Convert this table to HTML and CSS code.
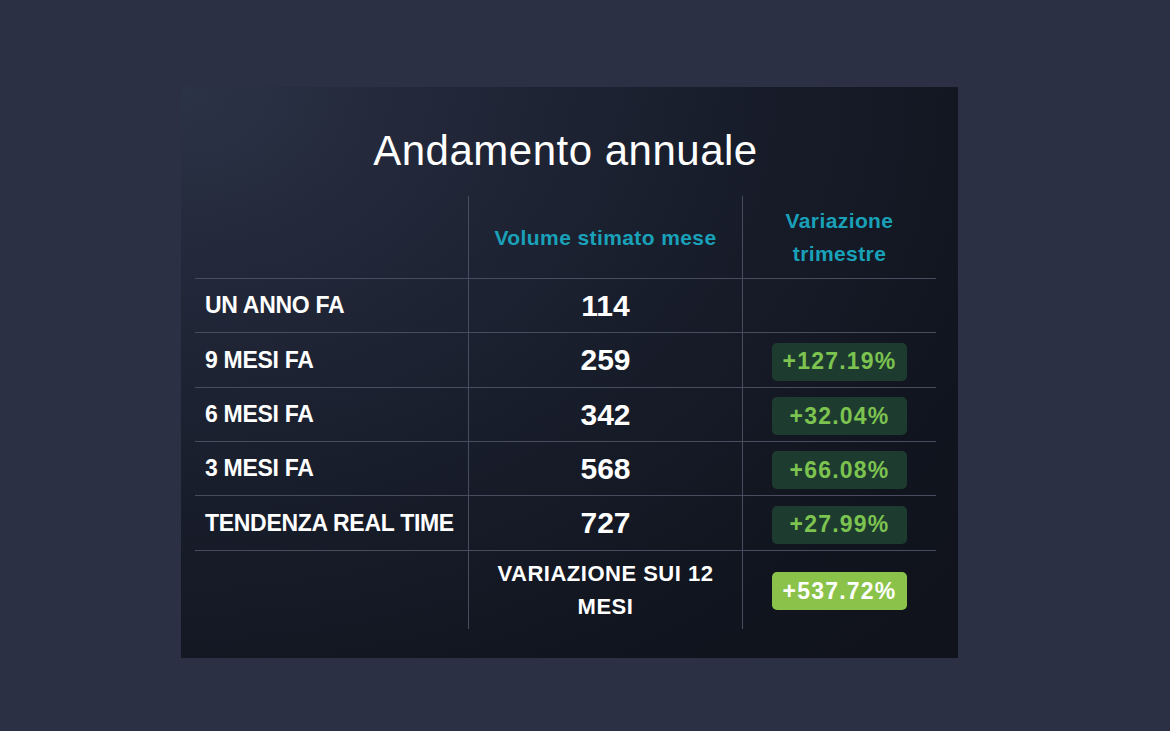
FILE: index.html
```html
<!DOCTYPE html>
<html lang="it">
<head>
<meta charset="utf-8">
<title>Andamento annuale</title>
<link rel="stylesheet" href="styles.css">
</head>
<body>
<section class="card">
  <h1 class="title">Andamento annuale</h1>
  <div class="table">
    <div class="cell c1 head"></div>
    <div class="cell c2 head"><span class="th">Volume stimato mese</span></div>
    <div class="cell c3 head"><span class="th th-2">Variazione<br>trimestre</span></div>

    <div class="cell c1"><span class="label">UN ANNO FA</span></div>
    <div class="cell c2"><span class="num">114</span></div>
    <div class="cell c3"></div>

    <div class="cell c1"><span class="label">9 MESI FA</span></div>
    <div class="cell c2"><span class="num">259</span></div>
    <div class="cell c3"><span class="badge">+127.19%</span></div>

    <div class="cell c1"><span class="label">6 MESI FA</span></div>
    <div class="cell c2"><span class="num">342</span></div>
    <div class="cell c3"><span class="badge">+32.04%</span></div>

    <div class="cell c1"><span class="label">3 MESI FA</span></div>
    <div class="cell c2"><span class="num">568</span></div>
    <div class="cell c3"><span class="badge">+66.08%</span></div>

    <div class="cell c1"><span class="label">TENDENZA REAL TIME</span></div>
    <div class="cell c2"><span class="num">727</span></div>
    <div class="cell c3"><span class="badge">+27.99%</span></div>

    <div class="cell c1 last"></div>
    <div class="cell c2 last"><span class="total-label">VARIAZIONE SUI 12<br>MESI</span></div>
    <div class="cell c3 last"><span class="badge badge-strong">+537.72%</span></div>
  </div>
</section>
</body>
</html>
```

FILE: styles.css
```css
* { box-sizing: border-box; }

html, body {
  margin: 0;
  padding: 0;
}

body {
  background: #2c3044;
  width: 1170px;
  height: 731px;
  overflow: hidden;
  padding: 87px 0 0 181px;
  font-family: "Liberation Sans", Arial, sans-serif;
  color: #ffffff;
}

.card {
  width: 777px;
  height: 571px;
  padding: 40px 22px 0 14px;
  background:
    radial-gradient(ellipse 1000px 760px at 0% 0%, #2b3346 0%, #222839 25%, #181d2b 55%, #11151f 85%, #10131c 100%);
}

.title {
  margin: 0;
  font-size: 42px;
  line-height: 48px;
  font-weight: normal;
  text-align: center;
  letter-spacing: 0.5px;
  color: #ffffff;
}

.table {
  margin-top: 21px;
  display: grid;
  grid-template-columns: 274px 274px 193px;
  grid-template-rows: 83px 54px 55px 54px 54px 55px 78px;
}

.cell {
  display: flex;
  align-items: center;
  border-bottom: 1px solid #474d5e;
}

.cell.last { border-bottom: none; }

.c1 {
  border-right: 1px solid #474d5e;
  padding-left: 10px;
}

.c2 {
  border-right: 1px solid #474d5e;
  justify-content: center;
}

.c3 {
  justify-content: center;
}

.th {
  font-weight: bold;
  font-size: 21px;
  line-height: 33px;
  color: #19a1b9;
  text-align: center;
  letter-spacing: 0.4px;
}

.label {
  font-weight: bold;
  font-size: 23px;
  letter-spacing: -0.3px;
  color: #ffffff;
}

.num {
  font-weight: bold;
  font-size: 30px;
  color: #ffffff;
}

.total-label {
  font-weight: bold;
  font-size: 22px;
  line-height: 33px;
  text-align: center;
  letter-spacing: 0.5px;
  color: #ffffff;
}

.badge {
  display: flex;
  align-items: center;
  justify-content: center;
  width: 135px;
  height: 38px;
  margin-top: 3px;
  border-radius: 5px;
  background: #1e3b2f;
  color: #7cc350;
  font-weight: bold;
  font-size: 23px;
  letter-spacing: 1.2px;
}

.badge-strong {
  margin-top: 2px;
  background: #8bc34a;
  color: #ffffff;
}
```
